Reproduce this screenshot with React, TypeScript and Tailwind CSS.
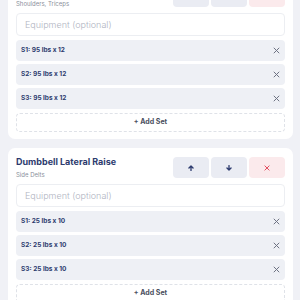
import React from "react";

type Ex = { name: string; muscles: string; sets: string[] };

const exercises: Ex[] = [
  { name: "Overhead Press", muscles: "Shoulders, Triceps", sets: ["S1: 95 lbs x 12", "S2: 95 lbs x 12", "S3: 95 lbs x 12"] },
  { name: "Dumbbell Lateral Raise", muscles: "Side Delts", sets: ["S1: 25 lbs x 10", "S2: 25 lbs x 10", "S3: 25 lbs x 10"] },
];

function XIcon({ color, size, w }: { color: string; size: number; w: number }) {
  return (
    <svg width={size} height={size} viewBox="0 0 10 10" fill="none">
      <path d="M1.5 1.5 L8.5 8.5 M8.5 1.5 L1.5 8.5" stroke={color} strokeWidth={w} strokeLinecap="round" />
    </svg>
  );
}

function Arrow({ up }: { up: boolean }) {
  return (
    <svg width="6" height="6" viewBox="0 0 10 10" fill="none" style={{ transform: up ? "none" : "rotate(180deg)" }}>
      <path d="M5 9 V1.8 M1.6 5 L5 1.6 L8.4 5" stroke="#2d3b6e" strokeWidth="2.2" strokeLinecap="round" strokeLinejoin="round" />
    </svg>
  );
}

function Card({ ex }: { ex: Ex }) {
  return (
    <div className="bg-white rounded-[7px] pl-[8px] pr-[8px] pt-[9px] pb-[7px] flex flex-col">
      <div className="flex justify-between items-start h-[22px]">
        <div className="flex flex-col">
          <div className="text-[9px] leading-[9px] font-bold text-[#2d3b6e]">{ex.name}</div>
          <div className="mt-[5px] text-[6px] leading-[8px] text-[#8b909c]">{ex.muscles}</div>
        </div>
        <div className="flex gap-[2px]">
          <div className="w-[36px] h-[21px] rounded-[4px] bg-[#eaecf3] flex items-center justify-center">
            <Arrow up />
          </div>
          <div className="w-[36px] h-[21px] rounded-[4px] bg-[#eaecf3] flex items-center justify-center">
            <Arrow up={false} />
          </div>
          <div className="w-[36px] h-[21px] rounded-[4px] bg-[#fbeaec] flex items-center justify-center">
            <XIcon color="#e2475a" size={6} w={1.6} />
          </div>
        </div>
      </div>
      <div className="mt-[5px] h-[23px] rounded-[4px] border border-[#eceef2] flex items-center pl-[8px] text-[9px] font-light text-[#b0b4bf]">
        Equipment (optional)
      </div>
      <div className="mt-[4px] flex flex-col gap-[3px]">
        {ex.sets.map((s) => (
          <div key={s} className="h-[21px] rounded-[4px] bg-[#eef0f5] flex items-center justify-between pl-[5px] pr-[5px]">
            <span className="text-[6.5px] font-bold text-[#2d3b6e]">{s}</span>
            <XIcon color="#6b7080" size={7} w={1.4} />
          </div>
        ))}
      </div>
      <div className="mt-[4px] h-[19px] rounded-[4px] border border-dashed border-[#dfe2e8] flex items-center justify-center text-[7px] font-bold text-[#4b5060]">
        + Add Set
      </div>
    </div>
  );
}

export default function App() {
  return (
    <div className="w-[300px] h-[300px] overflow-hidden bg-[#f0f1f6]" style={{ fontFamily: "Inter, 'Noto Sans', sans-serif" }}>
      <div className="-mt-[23px] pl-[8px] pr-[7px] flex flex-col gap-[9px]">
        {exercises.map((ex) => (
          <Card key={ex.name} ex={ex} />
        ))}
      </div>
    </div>
  );
}
